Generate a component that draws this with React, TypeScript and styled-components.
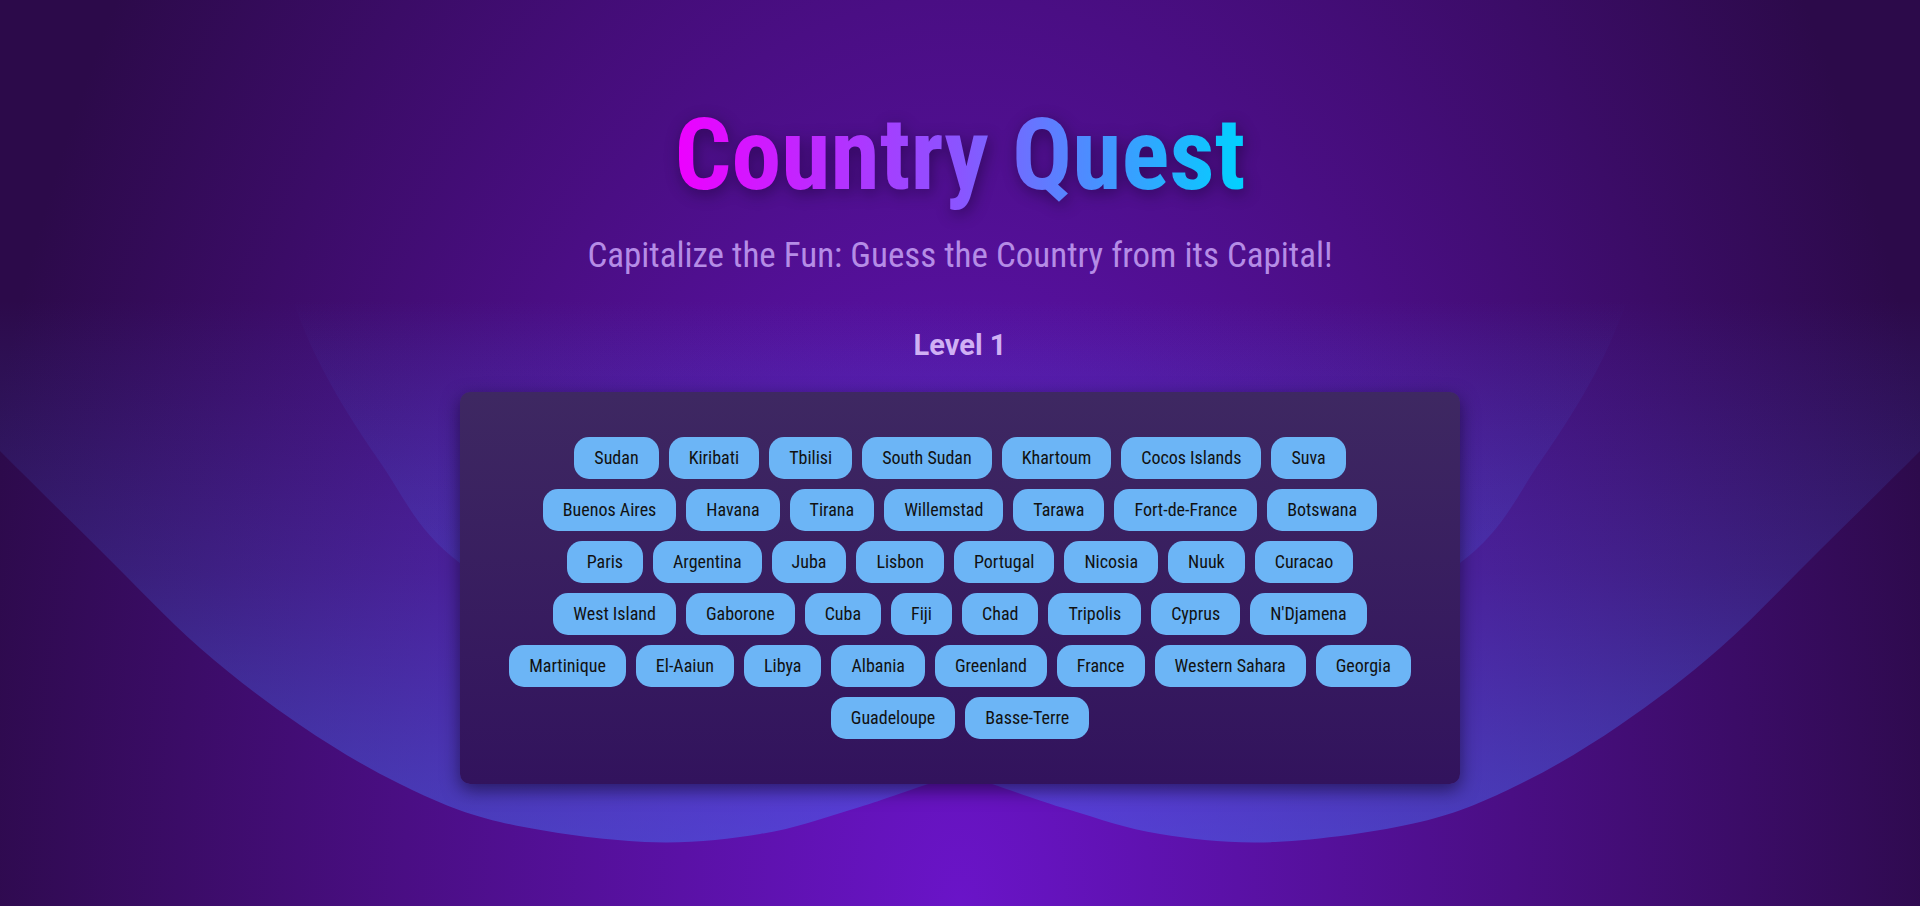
import React from "react";
import styled, { createGlobalStyle } from "styled-components";

const GlobalStyle = createGlobalStyle`
  html, body {
    margin: 0;
    padding: 0;
  }
  body {
    min-height: 100vh;
    font-family: "Roboto Condensed", "Roboto", "Liberation Sans Narrow", sans-serif;
    background: radial-gradient(1010px 1650px at 50% 100%, #6a14c8 0%, #4a0e84 55%, #2c0a4a 100%);
    background-color: #2c0a4a;
    overflow: hidden;
  }
`;

const Page = styled.main`
  position: relative;
  min-height: 100vh;
  box-sizing: border-box;
  padding-top: 96px;
  display: flex;
  flex-direction: column;
  align-items: center;
  overflow: hidden;
`;

const Backdrop = styled.svg`
  position: absolute;
  inset: 0;
  width: 100%;
  height: 100%;
  z-index: 0;
  pointer-events: none;
`;

const Content = styled.div`
  position: relative;
  z-index: 1;
  display: flex;
  flex-direction: column;
  align-items: center;
`;

const Title = styled.h1`
  margin: 0;
  font-size: 100px;
  font-weight: 700;
  line-height: normal;
  width: fit-content;
  background: linear-gradient(90deg, #ee00ff 0%, #8a55ff 50%, #00d2ff 100%);
  -webkit-background-clip: text;
  background-clip: text;
  color: transparent;
  -webkit-text-fill-color: transparent;
  filter: drop-shadow(2px 4px 8px rgba(10, 0, 30, 0.45));
`;

const Subtitle = styled.p`
  margin: 22px 0 0;
  font-size: 35px;
  font-weight: 400;
  line-height: normal;
  color: #b58ce6;
`;

const Level = styled.h2`
  margin: 52px 0 0;
  font-family: "Roboto", "Liberation Sans", sans-serif;
  font-size: 29px;
  font-weight: 700;
  line-height: normal;
  color: #d0b0f4;
`;

const Board = styled.section`
  margin-top: 30px;
  width: 1000px;
  box-sizing: border-box;
  padding: 40px;
  display: flex;
  flex-wrap: wrap;
  justify-content: center;
  align-content: flex-start;
  border-radius: 10px;
  background: linear-gradient(180deg, #3e2862 0%, #32135d 100%);
  box-shadow: 0 6px 18px rgba(10, 0, 25, 0.55);
`;

const Chip = styled.button`
  margin: 5px;
  padding: 10px 20px;
  border: none;
  border-radius: 15px;
  background: #6cb5f6;
  color: #111;
  font-family: inherit;
  font-size: 18px;
  line-height: 22px;
  font-weight: 400;
  cursor: pointer;
`;

const capitals = [
  "Sudan", "Kiribati", "Tbilisi", "South Sudan", "Khartoum", "Cocos Islands", "Suva",
  "Buenos Aires", "Havana", "Tirana", "Willemstad", "Tarawa", "Fort-de-France", "Botswana",
  "Paris", "Argentina", "Juba", "Lisbon", "Portugal", "Nicosia", "Nuuk", "Curacao",
  "West Island", "Gaborone", "Cuba", "Fiji", "Chad", "Tripolis", "Cyprus", "N'Djamena",
  "Martinique", "El-Aaiun", "Libya", "Albania", "Greenland", "France", "Western Sahara", "Georgia",
  "Guadeloupe", "Basse-Terre",
];

type Pt = [number, number];

const leftShape: Pt[] = [
  [-200, 240], [-90, 360], [0, 451], [100, 550], [200, 648], [300, 725], [400, 784], [500, 822],
  [645, 842], [760, 834], [850, 810], [931, 783], [1100, 726], [1280, 655], [1460, 563],
  [1540, 462], [1603, 358], [1650, 240],
];

function smoothPath(pts: Pt[]): string {
  let d = `M ${pts[0][0]} ${pts[0][1]}`;
  for (let i = 0; i < pts.length - 1; i++) {
    const p0 = pts[i - 1] || pts[i];
    const p1 = pts[i];
    const p2 = pts[i + 1];
    const p3 = pts[i + 2] || p2;
    const c1x = p1[0] + (p2[0] - p0[0]) / 6;
    const c1y = p1[1] + (p2[1] - p0[1]) / 6;
    const c2x = p2[0] - (p3[0] - p1[0]) / 6;
    const c2y = p2[1] - (p3[1] - p1[1]) / 6;
    d += ` C ${c1x.toFixed(1)} ${c1y.toFixed(1)} ${c2x.toFixed(1)} ${c2y.toFixed(1)} ${p2[0]} ${p2[1]}`;
  }
  return d + " Z";
}

const leftD = smoothPath(leftShape);
const rightD = smoothPath(leftShape.map(([x, y]) => [1920 - x, y] as Pt));

export default function App() {
  return (
    <>
      <GlobalStyle />
      <Page>
        <Backdrop viewBox="0 0 1920 906" preserveAspectRatio="none" aria-hidden="true">
          <defs>
            <linearGradient id="arcFill" gradientUnits="userSpaceOnUse" x1="0" y1="300" x2="0" y2="842">
              <stop offset="0" stopColor="rgb(70,110,240)" stopOpacity="0" />
              <stop offset="0.1" stopColor="rgb(70,110,240)" stopOpacity="0.05" />
              <stop offset="0.5" stopColor="rgb(70,110,240)" stopOpacity="0.2" />
              <stop offset="1" stopColor="rgb(70,110,240)" stopOpacity="0.5" />
            </linearGradient>
          </defs>
          <path d={leftD} fill="url(#arcFill)" />
          <path d={rightD} fill="url(#arcFill)" />
        </Backdrop>
        <Content>
          <Title>Country Quest</Title>
          <Subtitle>Capitalize the Fun: Guess the Country from its Capital!</Subtitle>
          <Level>Level 1</Level>
          <Board>
            {capitals.map((c, i) => (
              <Chip key={i} type="button">{c}</Chip>
            ))}
          </Board>
        </Content>
      </Page>
    </>
  );
}
